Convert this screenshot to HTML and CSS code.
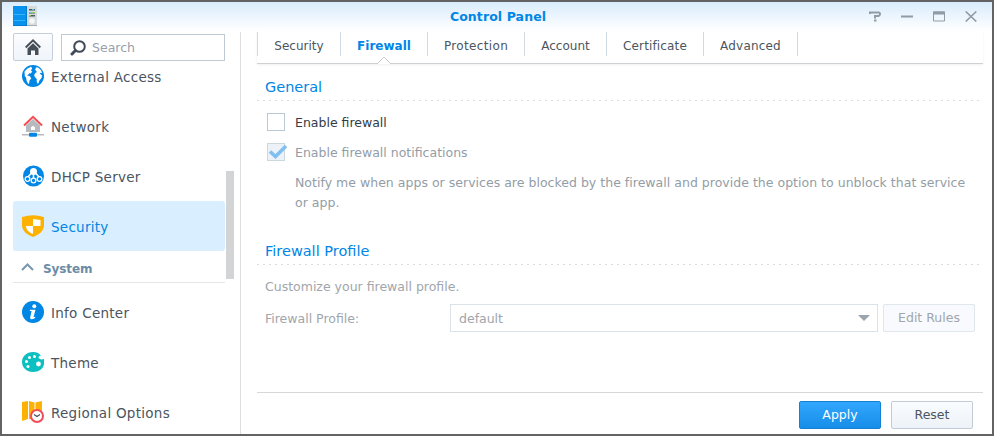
FILE: index.html
```html
<!DOCTYPE html>
<html lang="en">
<head>
<meta charset="utf-8">
<title>Control Panel</title>
<link rel="stylesheet" href="styles.css">
</head>
<body>
<div class="window">
  <header class="titlebar">
    <svg class="app-icon" width="24" height="20" viewBox="0 0 24 20"><path fill="#d5dadd" d="M14 0h10v20H14z"/><path fill="#0692ee" d="M0 0h14v20H0z"/><path fill="#057bd0" d="M0 19h14v1H0zM13 0h1v20h-1z"/><path stroke="#35b4fa" d="M1 8.500h11M1 14.500h11"/><path fill="#4b5a63" d="M16 3h6v1.500h-6zM16 6h6v1.500h-6zM16 9h6v1.500h-6z"/><path fill="#53c7e8" d="M19 3h2v1h-2zM16 6h3v1h-3z"/><path fill="#9bce58" d="M19 6h3v1h-3zM16 9h2v1h-2z"/><circle cx="19" cy="15" r="2.800" fill="#f4f6f7"/><path fill="#a9b0b5" d="M14 19h10v1H14z"/></svg>
    <h1>Control Panel</h1>
    <div class="controls">
      <svg width="12" height="11" viewBox="0 0 12 11" fill="none" stroke="#919ba5" stroke-width="2"><path d="M1 3V1.500h8.500Q11 1.500 11 3T9.500 5H6v2.500M5 9.500h2.500"/></svg>
      <svg width="12" height="11" viewBox="0 0 12 11" fill="none" stroke="#919ba5" stroke-width="2"><path d="M0 5.500h12"/></svg>
      <svg width="12" height="11" viewBox="0 0 12 11" fill="none" stroke="#919ba5"><path d="M.5 1v9h11V1z"/><path stroke-width="3" d="M0 2h12"/></svg>
      <svg width="12" height="11" viewBox="0 0 12 11" fill="none" stroke="#919ba5" stroke-width="1.600"><path d="M.7.5l10.600 10M11.300.5L.7 10.500"/></svg>
    </div>
  </header>
  <div class="body">
    <aside class="sidebar">
      <div class="tools">
        <button class="home"><svg width="16" height="16" viewBox="0 0 16 16"><path fill="none" stroke="#464f58" stroke-width="2" d="M.7 8.500L8 1.400l7.300 7.100"/><path fill="#464f58" d="M2.500 9.500L8 4.200l5.500 5.300V16H10v-4.500H6V16H2.500z"/></svg></button>
        <div class="search"><svg width="16" height="16" viewBox="0 0 16 16" fill="none" stroke="#414b55"><circle cx="9.500" cy="6.500" r="5.300" stroke-width="2"/><path stroke-width="3" stroke-linecap="round" d="M5.200 10.800L2 14"/></svg><span>Search</span></div>
      </div>
      <div class="list">
        <nav>
          <a class="item"><svg class="ic" viewBox="0 0 22 22"><circle cx="11" cy="11" r="11" fill="#0086e5"/><path fill="#fff" d="M2.500 6.500L5.500 3.500 9 1.800l1.200 1.500L9 5.500l1.300 1.200-1.800 1.800-1.300-.3-.8 1.300-1.500.8 3 1 1.400 2.200-1.800 2-.3 2.800-1 .8-1.600-3.300-.5-3L2.800 11zM13 4.200l1.800-2.200 2.200 1.200 2 2 1.300 3-.8-.5-1.800.2 1.500 2 1 .4-.7 2.800-2.200 2.700-.9 2.600-1 .2-.8-2.700.3-1.700-2-2.100-.8-2 1.200-2.200 1.700-.8-1-1.200z"/></svg><span>External Access</span></a>
          <a class="item"><svg class="ic" viewBox="0 0 22 22"><path fill="#b6babf" d="M11 4l7 6.500V17H4v-6.500zM0 19h22v1.500H0z"/><path fill="#fff" d="M9 15v-2.700l2-1.600 2 1.600V15z"/><path fill="none" stroke="#f44c50" stroke-width="2" d="M2 10.500l9-8.700 9 8.700"/><rect x="7" y="17.700" width="8" height="4" rx="1" fill="#0086e5"/></svg><span>Network</span></a>
          <a class="item"><svg class="ic" viewBox="0 0 22 22"><circle cx="11.500" cy="11" r="10.500" fill="#0086e5"/><circle cx="11.500" cy="6.500" r="3.500" fill="#fff"/><path fill="none" stroke="#fff" stroke-width="1.500" d="M9.500 8l-4 4.500M13.500 8l4 4.500M11.500 9v4"/><g fill="#0086e5" stroke="#fff" stroke-width="1.300"><circle cx="5.500" cy="14" r="2.300"/><circle cx="11.500" cy="15.500" r="2.300"/><circle cx="17.500" cy="14" r="2.300"/></g></svg><span>DHCP Server</span></a>
          <a class="item active"><svg class="ic" viewBox="0 0 22 22"><path fill="#fdb100" d="M0 2Q6 .3 11 .3T22 2v8c0 6-5 9.800-11 12C5 19.800 0 16 0 10z"/><path fill="#fff" d="M11 4l7.500 1v6H11zM4 11h7v8c-4.500-1.800-7-4.500-7-8z"/></svg><span>Security</span></a>
        </nav>
        <div class="group"><svg width="13" height="8" viewBox="0 0 13 8" fill="none" stroke="#7897af" stroke-width="2"><path d="M1 7l5.500-5.500L12 7"/></svg><span>System</span></div>
        <nav>
          <a class="item"><svg class="ic" viewBox="0 0 22 22"><circle cx="11" cy="11" r="11" fill="#0086e5"/><circle cx="12.300" cy="5.200" r="2" fill="#fff"/><path fill="#fff" d="M8 8.700h5.500l-2 7.600 2-.5-.5 1.200q-2 1.500-4 1.300-1.200-.3-.8-2L9.600 10H7.800z"/></svg><span>Info Center</span></a>
          <a class="item"><svg class="ic" viewBox="0 0 22 22"><path fill="#0cbfc0" d="M11 1C4.500 1 0 5.500 0 11s4.500 10 11 10c5.500 0 11-3.500 11-8.500V8l-3 .5-2.500-1.500.5-2 2-.5C17 2 14.500 1 11 1z"/><g fill="#fff"><circle cx="7.500" cy="6.500" r="1.500"/><circle cx="12.500" cy="5.500" r="1.500"/><circle cx="4.500" cy="10.500" r="1.500"/><circle cx="6" cy="15.500" r="1.500"/><circle cx="16.500" cy="13" r="2.400"/></g></svg><span>Theme</span></a>
          <a class="item"><svg class="ic" viewBox="0 0 22 22"><path fill="#fdb100" d="M0 1l6-1v18l-6 2zM7 0l5.500 1.500V18H7zM13.500 1.500L20 0v12h-6.500z"/><circle cx="15" cy="15" r="6" fill="#fff" stroke="#f44c57" stroke-width="2"/><path fill="none" stroke="#444e59" stroke-width="1.200" d="M12 13.500l3 2 3-2"/></svg><span>Regional Options</span></a>
        </nav>
        <div class="thumb"></div>
      </div>
    </aside>
    <main class="main">
      <div class="tabs">
        <a class="t1">Security</a><a class="t2 on">Firewall<svg class="caret" width="16" height="8" viewBox="0 0 16 8"><path fill="#fff" stroke="#c9cccf" d="M.5 7.500h1L8 1l6.500 6.500h1"/><path fill="#fff" d="M2 7h12v1H2z"/></svg></a><a class="t3">Protection</a><a class="t4">Account</a><a class="t5">Certificate</a><a class="t6">Advanced</a>
      </div>
      <section class="general">
        <h2>General</h2>
        <label class="check"><i class="box"></i><span>Enable firewall</span></label>
        <label class="check off"><i class="box"><svg width="18" height="14" viewBox="0 0 18 14"><path fill="none" stroke="#80bff0" stroke-width="3.500" d="M1 6.500l5.500 5L17 1"/></svg></i><span>Enable firewall notifications</span></label>
        <p class="note"><span>Notify me when apps or services are blocked by the firewall and provide the option to unblock that service</span><br>or app.</p>
      </section>
      <section class="profile">
        <h2>Firewall Profile</h2>
        <p class="custom">Customize your firewall profile.</p>
        <div class="row"><span class="label">Firewall Profile:</span><div class="select"><span>default</span><svg width="12" height="6" viewBox="0 0 12 6"><path fill="#9ca4ac" d="M0 0h12L6 6z"/></svg></div><button class="edit">Edit Rules</button></div>
      </section>
      <footer><button class="apply">Apply</button><button class="reset">Reset</button></footer>
    </main>
  </div>
</div>
</body>
</html>
```
FILE: styles.css
```css
* { box-sizing: border-box; }
body { margin: 0; font: 12.5px/20px "DejaVu Sans", Verdana, sans-serif; color: #4b555f; }
h1, h2, p { margin: 0; }
button { font: inherit; color: inherit; padding: 0; border-radius: 2px; }
svg { display: block; flex: none; }
span, a { white-space: nowrap; }

.window { width: 994px; height: 436px; border: 2px solid #636363; background: linear-gradient(#d9ecfc, #fff 29px); display: flex; flex-direction: column; overflow: hidden; }
.titlebar { height: 30px; flex: none; display: grid; grid-template-columns: 120px 1fr 120px; align-items: center; padding: 0 15px 0 11px; }
.app-icon { margin-top: -2px; }
h1 { text-align: center; font-size: 12.5px; letter-spacing: 0.1px; color: #0086e5; line-height: 20px; margin-top: -1px; padding-left: 6px; }
.controls { display: flex; justify-content: flex-end; gap: 20px; margin-top: -2px; }

.body { display: flex; flex: 1; min-height: 0; }
.sidebar { width: 239px; border-right: 1px solid #dcdee0; padding-left: 11px; display: flex; flex-direction: column; }
.tools { display: flex; padding-top: 1px; height: 30px; flex: none; }
.home { width: 40px; height: 28px; border: 1px solid #c4cfda; background: linear-gradient(#fbfcfe, #f0f5fa); display: flex; align-items: center; justify-content: center; }
.search { width: 164px; height: 27px; margin: 1px 0 0 8px; border: 1px solid #bfcad4; background: #fff; display: flex; align-items: center; padding-left: 8px; gap: 6px; color: #98a1ab; }
.list { flex: 1; min-height: 0; overflow: hidden; position: relative; }
.list nav:first-child { margin-top: -11px; }
.item { height: 50px; width: 212px; display: flex; align-items: center; padding-left: 9px; gap: 7px; font-size: 13.5px; letter-spacing: 0.27px; }
.item span { margin-top: 2px; }
.ic { width: 22px; height: 22px; }
.active { background: #d9eefe; border-radius: 3px; color: #0086e5; }
.group { display: flex; align-items: center; gap: 9px; height: 32px; width: 212px; padding-left: 8px; border-bottom: 1px solid #e3e7ea; margin-bottom: 4px; font-size: 12px; letter-spacing: -0.1px; font-weight: bold; color: #6c8ca6; }
.group span { margin-top: 4px; }
.thumb { position: absolute; left: 213px; top: 109px; width: 8px; height: 108px; background: #d3d4d6; }

.main { flex: 1; padding: 0 9px 0 16px; display: flex; flex-direction: column; }
.tabs { height: 32px; flex: none; border-bottom: 1px solid #cfd2d4; display: flex; box-shadow: 0 1px 2px #f0f0f0; font-size: 12px; }
.tabs a { height: 24px; text-align: center; line-height: 28px; border-right: 1px solid #ced9e2; position: relative; }
.tabs .t1 { width: 84px; border-left: 1px solid #ced9e2; }
.t2 { width: 87px; }
.t3 { width: 97px; letter-spacing: 0.35px; }
.t4 { width: 82px; }
.t5 { width: 97px; letter-spacing: 0.15px; }
.t6 { width: 94px; letter-spacing: 0.2px; }
.on { font-weight: bold; color: #0086e5; }
.caret { position: absolute; left: 35px; top: 24px; }
h2 { font-size: 14.5px; line-height: 26px; font-weight: normal; color: #0086e5; height: 27px; padding-left: 8px; background: repeating-linear-gradient(90deg, #dadcde 0 2px, transparent 2px 6px) 0 100% / 100% 1px no-repeat; }
.general { padding-top: 10px; height: 164px; }
.check { display: flex; align-items: center; height: 18px; margin: 12px 0 0 10px; gap: 10px; color: #333c45; }
.check span { margin-top: 2px; }
.box { width: 18px; height: 18px; border: 1px solid #b9c8d2; display: flex; align-items: center; background: #fff; }
.off { color: #939da6; }
.off .box { background: #ecf2f7; border-color: #ccd8e0; padding-left: 1px; }
.note { margin: 12px 0 0 38px; color: #939da6; letter-spacing: 0.02px; }
.profile { padding-top: 10px; }
.custom { margin: 12px 0 0 8px; color: #a0a6ac; }
.row { display: flex; align-items: center; height: 28px; margin-top: 7px; padding-left: 8px; color: #a0a6ac; }
.row span { padding-top: 1px; }
.label { width: 185px; }
.select { width: 428px; height: 28px; border: 1px solid #dbe2e8; display: flex; align-items: center; justify-content: space-between; padding: 0 7px 0 8px; background: #fff; }
.edit { width: 92px; height: 28px; margin-left: 5px; border: 1px solid #dfe6ec; background: #f8fafd; }
footer { margin-top: auto; height: 42px; border-top: 1px solid #d5d7d9; display: flex; justify-content: flex-end; gap: 10px; padding: 8px 10px 0 0; }
footer button { width: 82px; height: 28px; }
.apply { background: linear-gradient(#32a7ff, #168de7); border: 1px solid #1380d2; color: #fff; }
.reset { background: linear-gradient(#fafcfe, #edf2f8); border: 1px solid #c1ccd8; }
```
